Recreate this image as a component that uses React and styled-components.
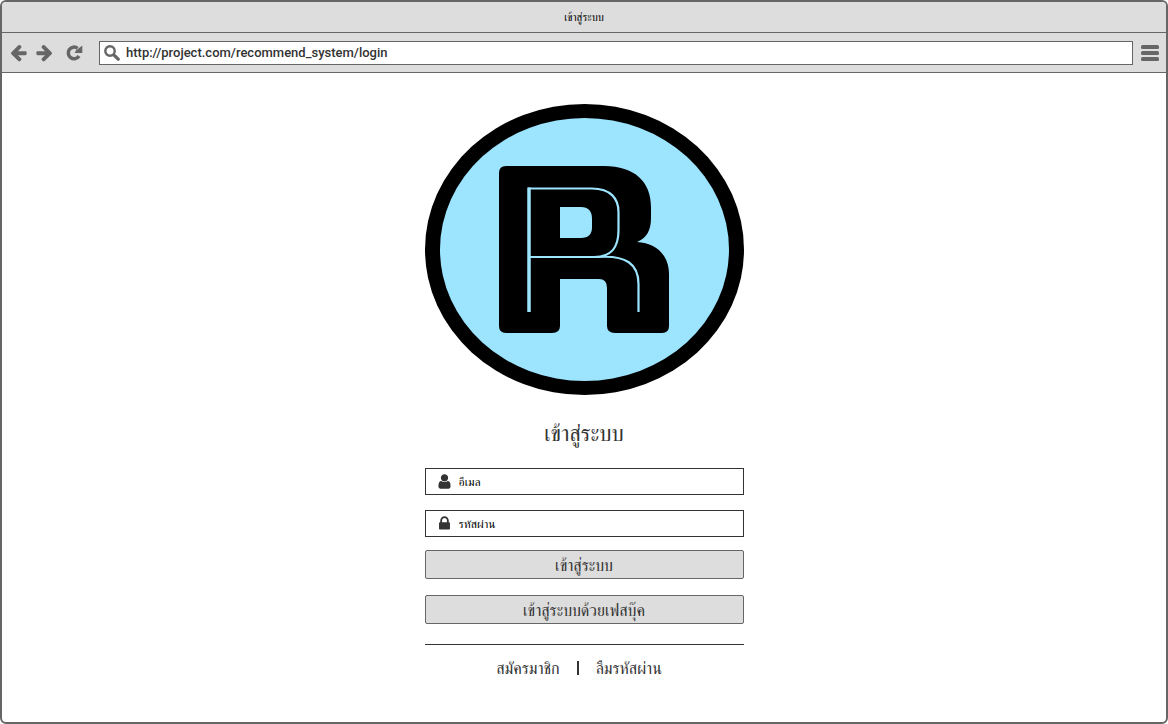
import React from "react";
import styled, { createGlobalStyle } from "styled-components";

const ink = "#333333";
const chrome = "#666666";
const panel = "#dddddd";

const GlobalStyle = createGlobalStyle`
  * { box-sizing: border-box; }
  body {
    margin: 0;
    background: #ffffff;
    color: ${ink};
    font-family: FreeSerif, "Liberation Serif", serif;
  }
`;

const Window = styled.div`
  display: flex;
  flex-direction: column;
  min-height: 100vh;
  border: 2px solid ${chrome};
  border-radius: 6px;
  background: #ffffff;
  overflow: hidden;
`;

const TitleBar = styled.header`
  display: flex;
  align-items: center;
  justify-content: center;
  height: 31px;
  padding-top: 1px;
  background: ${panel};
  border-bottom: 1px solid ${chrome};
  font-size: 11px;
  line-height: 16px;
  color: #000000;
`;

const Toolbar = styled.nav`
  display: flex;
  align-items: center;
  height: 40px;
  padding: 0 7px;
  background: ${panel};
  border-bottom: 1px solid ${chrome};
`;

const NavGroup = styled.div`
  display: flex;
  gap: 7px;
  margin-right: 15px;
`;

const IconButton = styled.button`
  display: flex;
  align-items: center;
  justify-content: center;
  width: 19px;
  height: 20px;
  padding: 0;
  border: 0;
  background: none;
  color: ${chrome};
  margin-left: ${(p) => (p.$spaced ? "4px" : "0")};
`;

const AddressBar = styled.div`
  display: flex;
  flex: 1;
  align-items: center;
  gap: 6px;
  height: 24px;
  margin-right: 7px;
  padding-left: 4px;
  border: 1px solid ${chrome};
  background: #ffffff;
  color: ${chrome};
`;

const AddressInput = styled.input`
  flex: 1;
  min-width: 0;
  padding: 1px 0 0;
  border: 0;
  outline: 0;
  background: none;
  color: ${ink};
  font-family: Roboto, sans-serif;
  font-size: 13px;
  font-weight: 500;
  line-height: 20px;
`;

const Main = styled.main`
  display: flex;
  flex: 1;
  flex-direction: column;
  align-items: center;
  padding: 31px 16px 40px;
`;

const LoginPanel = styled.form`
  display: flex;
  flex-direction: column;
  width: 100%;
  max-width: 319px;
`;

const LogoArt = styled.svg`
  display: block;
  width: 100%;
  height: auto;
`;

const Heading = styled.h1`
  margin: 23px 0 18px;
  font-size: 22px;
  font-weight: 400;
  line-height: 32px;
  text-align: center;
`;

const Field = styled.label`
  display: flex;
  align-items: center;
  gap: 6px;
  height: 27px;
  margin-bottom: ${(p) => (p.$last ? "13px" : "15px")};
  padding-left: 10px;
  border: 1px solid ${ink};
  color: ${ink};
`;

const FieldInput = styled.input`
  flex: 1;
  min-width: 0;
  height: 22px;
  padding: 2px 0 0;
  border: 0;
  outline: 0;
  background: none;
  color: ${ink};
  font-family: inherit;
  font-size: 12px;

  &::placeholder {
    color: #000000;
    opacity: 1;
  }
`;

const Actions = styled.div`
  display: flex;
  flex-direction: column;
  gap: 16px;
  padding-bottom: 20px;
  border-bottom: 1px solid ${ink};
`;

const ActionButton = styled.button`
  display: flex;
  align-items: center;
  justify-content: center;
  height: 29px;
  padding: 2px 0 0;
  border: 1px solid ${chrome};
  border-radius: 2px;
  background: ${panel};
  color: ${ink};
  font-family: inherit;
  font-size: 16px;
  line-height: 24px;
`;

const Links = styled.div`
  display: flex;
  align-items: center;
  justify-content: center;
  gap: 17px;
  padding: 10px 10px 0 0;
`;

const TextLink = styled.a`
  padding-top: 2px;
  color: ${ink};
  font-size: 16px;
  line-height: 24px;
  text-decoration: none;
`;

const Divider = styled.span`
  width: 2px;
  height: 14px;
  background: ${ink};
`;

const paths = {
  arrow:
    "M1664 896v128q0 53-32.5 90.5t-84.5 37.5h-704l293 294q38 36 38 90t-38 90l-75 76q-37 37-90 37-52 0-91-37l-651-652q-37-37-37-90 0-52 37-91l651-650q38-38 91-38 52 0 90 38l75 74q38 38 38 91t-38 91l-293 293h704q52 0 84.5 37.5t32.5 90.5z",
  user:
    "M1536 1399q0 109-62.5 187t-150.5 78h-854q-88 0-150.5-78t-62.5-187q0-85 8.5-160.5t31.5-152 58.5-131 94-89 134.5-34.5q131 128 313 128t313-128q76 0 134.5 34.5t94 89 58.5 131 31.5 152 8.5 160.5zm-256-887q0 159-112.5 271.5t-271.5 112.5-271.5-112.5-112.5-271.5 112.5-271.5 271.5-112.5 271.5 112.5 112.5 271.5z",
  lock:
    "M640 768h512v-192q0-106-75-181t-181-75-181 75-75 181v192zm832 96v576q0 40-28 68t-68 28h-960q-40 0-68-28t-28-68v-576q0-40 28-68t68-28h32v-192q0-184 132-316t316-132 316 132 132 316v192h32q40 0 68 28t28 68z",
};

function Icon({ name, size = 17, flip = false }) {
  return (
    <svg width={size} height={size} viewBox="0 0 1792 1792" fill="currentColor" aria-hidden="true">
      <path d={paths[name]} transform={flip ? "translate(1792 0) scale(-1 1)" : undefined} />
    </svg>
  );
}

function ReloadIcon() {
  return (
    <svg width="19" height="18" viewBox="0 0 19 18" aria-hidden="true">
      <path
        d="M14 12A5.800 5.800 0 1 1 12.600 4.300"
        fill="none"
        stroke="currentColor"
        strokeWidth="3.500"
      />
      <path d="M17.300 1.400V9H9.600L11 6.500Z" fill="currentColor" />
    </svg>
  );
}

function SearchIcon() {
  return (
    <svg width="16" height="16" viewBox="0 0 16 16" fill="none" stroke="currentColor" aria-hidden="true">
      <circle cx="6" cy="6" r="4.700" strokeWidth="2.400" />
      <path d="M9.800 9.800L14.200 14.200" strokeWidth="3.300" strokeLinecap="round" />
    </svg>
  );
}

function MenuIcon() {
  return (
    <svg width="18" height="18" viewBox="0 0 18 18" fill="currentColor" aria-hidden="true">
      <rect x="0" y="1" width="18" height="4" rx="1.5" />
      <rect x="0" y="7" width="18" height="4" rx="1.5" />
      <rect x="0" y="13" width="18" height="4" rx="1.5" />
    </svg>
  );
}

function Logo() {
  return (
    <LogoArt viewBox="425 104 319 291" role="img" aria-label="R">
      <ellipse cx="584.5" cy="249.5" rx="159.5" ry="145.5" fill="#000000" />
      <ellipse cx="584.5" cy="249.5" rx="144.5" ry="131.5" fill="#9de4ff" />
      <path
        fill="#000000"
        fillRule="evenodd"
        d="M506 166H604C635 166 651 182 651 207V218C651 230 647 238 637 242C656 243 669 255 669 274V326Q669 333 662 333H615Q607 333 607 326V288Q607 279 599 279H560V326Q560 333 552 333H506Q499 333 499 326V173Q499 166 506 166ZM560 207V238H581Q592 238 592 227V219Q592 207 581 207Z"
      />
      <g fill="none" stroke="#9de4ff">
        <path strokeWidth="3.5" d="M529 312V187.500" />
        <path
          strokeWidth="2.200"
          d="M528 188.500H592C611 188.500 618.500 199 618.500 212V230C618.500 247 612 257 594 257H530M598 257C626 255 638.500 264 638.500 284V312"
        />
      </g>
    </LogoArt>
  );
}

export default function App() {
  return (
    <>
      <GlobalStyle />
      <Window>
        <TitleBar>เข้าสู่ระบบ</TitleBar>
        <Toolbar>
          <NavGroup>
            <IconButton type="button" aria-label="Back">
              <Icon name="arrow" size={19} />
            </IconButton>
            <IconButton type="button" aria-label="Forward">
              <Icon name="arrow" size={19} flip />
            </IconButton>
            <IconButton type="button" aria-label="Reload" $spaced>
              <ReloadIcon />
            </IconButton>
          </NavGroup>
          <AddressBar>
            <SearchIcon />
            <AddressInput
              type="text"
              aria-label="Address"
              defaultValue="http://project.com/recommend_system/login"
            />
          </AddressBar>
          <IconButton type="button" aria-label="Menu">
            <MenuIcon />
          </IconButton>
        </Toolbar>
        <Main>
          <LoginPanel onSubmit={(e) => e.preventDefault()}>
            <Logo />
            <Heading>เข้าสู่ระบบ</Heading>
            <Field>
              <Icon name="user" />
              <FieldInput type="email" aria-label="อีเมล" placeholder="อีเมล" />
            </Field>
            <Field $last>
              <Icon name="lock" />
              <FieldInput type="password" aria-label="รหัสผ่าน" placeholder="รหัสผ่าน" />
            </Field>
            <Actions>
              <ActionButton type="submit">เข้าสู่ระบบ</ActionButton>
              <ActionButton type="button">เข้าสู่ระบบด้วยเฟสบุ๊ค</ActionButton>
            </Actions>
            <Links>
              <TextLink href="#register">สมัครมาชิก</TextLink>
              <Divider />
              <TextLink href="#forgot">ลืมรหัสผ่าน</TextLink>
            </Links>
          </LoginPanel>
        </Main>
      </Window>
    </>
  );
}
